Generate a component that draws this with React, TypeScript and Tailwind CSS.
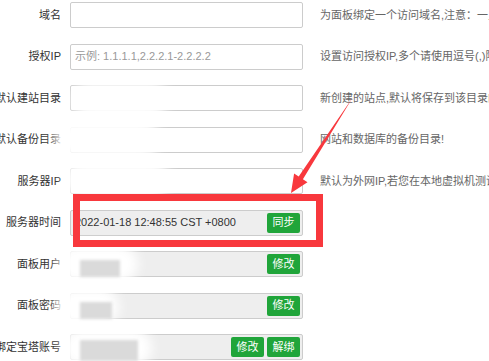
import React from "react";

type Row = {
  label: string;
  value?: string;
  placeholder?: string;
  readonly?: boolean;
  desc?: string;
  buttons?: string[];
};

const rows: Row[] = [
  { label: "域名", desc: "为面板绑定一个访问域名,注意：一旦开启，将只能通过域名访问面板" },
  { label: "授权IP", placeholder: "示例: 1.1.1.1,2.2.2.1-2.2.2.2", desc: "设置访问授权IP,多个请使用逗号(,)隔开" },
  { label: "默认建站目录", desc: "新创建的站点,默认将保存到该目录的下级目录" },
  { label: "默认备份目录", desc: "网站和数据库的备份目录!" },
  { label: "服务器IP", desc: "默认为外网IP,若您在本地虚拟机测试，请填写虚拟机内网IP" },
  { label: "服务器时间", value: "2022-01-18 12:48:55 CST +0800", readonly: true, buttons: ["同步"] },
  { label: "面板用户", readonly: true, buttons: ["修改"] },
  { label: "面板密码", readonly: true, buttons: ["修改"] },
  { label: "绑定宝塔账号", readonly: true, buttons: ["修改", "解绑"] },
];

function Blob({ x, y, w, h }: { x: number; y: number; w: number; h: number }) {
  return (
    <div
      className="absolute rounded-full bg-white blur-[6px]"
      style={{ left: x, top: y, width: w, height: h }}
    />
  );
}

function Pix({ x, y, w, h }: { x: number; y: number; w: number; h: number }) {
  return (
    <div
      className="absolute bg-[#dadada] blur-[1.5px]"
      style={{ left: x, top: y, width: w, height: h }}
    />
  );
}

export default function App() {
  return (
    <div
      className="relative w-[489px] h-[361px] overflow-hidden bg-white text-[11px] text-[#333]"
      style={{ fontFamily: '"Liberation Sans", "Noto Sans CJK SC", sans-serif' }}
    >
      <div className="flex flex-col gap-[15.5px] pt-[2px]">
        {rows.map((r, i) => (
          <div key={i} className="flex items-center h-[26px]">
            <div className="w-[61px] shrink-0 flex justify-end">
              <span className="whitespace-nowrap">{r.label}</span>
            </div>
            <div
              className={
                "ml-[9px] w-[233px] h-[26px] shrink-0 border border-[#ccc] rounded-[2px] flex items-center justify-between pl-[4px] pr-[2px] " +
                (r.readonly ? "bg-[#eeeeee]" : "bg-white")
              }
            >
              <span className={r.placeholder ? "text-[#999] whitespace-nowrap" : "text-[#333] whitespace-nowrap"}>
                {r.value ?? r.placeholder ?? ""}
              </span>
              {r.buttons && (
                <div className="flex gap-[3px]">
                  {r.buttons.map((b) => (
                    <span
                      key={b}
                      className="h-[20px] w-[33px] flex items-center justify-center bg-[#20a53a] text-white rounded-[2px] text-[11px]"
                    >
                      {b}
                    </span>
                  ))}
                </div>
              )}
            </div>
            {r.desc && (
              <div className="ml-[17px] whitespace-nowrap text-[#666]">{r.desc}</div>
            )}
          </div>
        ))}
      </div>

      {/* privacy blur smudges */}
      <Blob x={72} y={82} w={96} h={36} />
      <Blob x={54} y={120} w={106} h={38} />
      <Blob x={64} y={161} w={106} h={38} />
      <Blob x={58} y={245} w={80} h={38} />
      <Pix x={80} y={260} w={40} h={17} />
      <Blob x={55} y={288} w={64} h={38} />
      <Pix x={80} y={302} w={32} h={17} />
      <Blob x={62} y={329} w={90} h={38} />
      <Pix x={80} y={340} w={58} h={21} />

      {/* red highlight box */}
      <div className="absolute left-[73px] top-[194px] w-[250px] h-[53px] border-[7px] border-[#f8383d]" />

      {/* arrow */}
      <svg className="absolute left-0 top-0" width="489" height="361" viewBox="0 0 489 361">
        <polygon
          points="353,97 302.9,179.2 307.5,182.2 291,193 294.1,173.6 298.7,176.5"
          fill="#f8383d"
        />
      </svg>
    </div>
  );
}
